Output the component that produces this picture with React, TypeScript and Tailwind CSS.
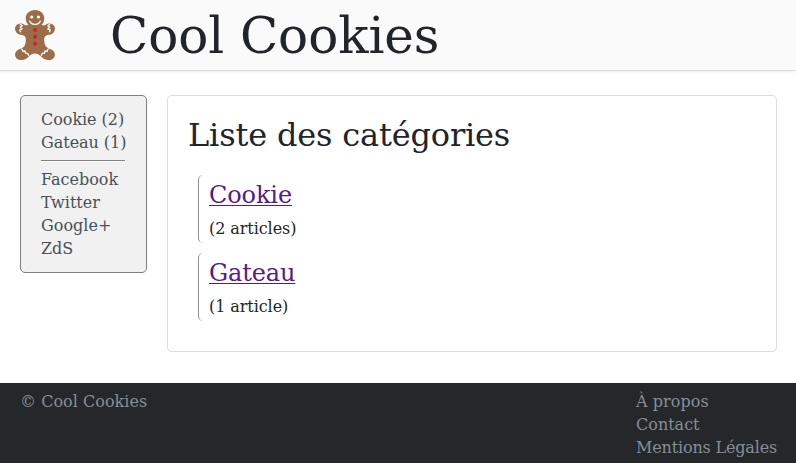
import React from "react";

const categories = [
  { name: "Cookie", count: 2 },
  { name: "Gateau", count: 1 },
];
const socials = ["Facebook", "Twitter", "Google+", "ZdS"];

function Gingerbread() {
  return (
    <svg className="ml-[15px] h-[50px] w-[40px] shrink-0" viewBox="0 0 40 50">
      <path
        d="M20 0C14.4 0 10.7 3.8 10.7 8.4C10.7 11 11.8 13.2 13.4 14.8C12 15.5 10.8 15.6 9.4 14.8C6.4 12.4 2 13.2 .5 16.6C-1 20.4 1.6 24.2 5.4 24.7C8 25 10.2 25.4 10.6 27.8C11.1 31 10.6 34.4 9 36.6C7.6 38.4 5.6 38.8 3.6 39.6C.6 41 -.5 44 .4 46.4C1.6 49.6 5.4 50.4 8.6 49.8C13.2 49 15 43.6 20 43.6C25 43.6 26.8 49 31.4 49.8C34.6 50.4 38.4 49.6 39.6 46.4C40.5 44 39.4 41 36.4 39.6C34.4 38.8 32.4 38.4 31 36.6C29.4 34.4 28.9 31 29.4 27.8C29.8 25.4 32 25 34.6 24.7C38.4 24.2 41 20.4 39.5 16.6C38 13.2 33.6 12.4 30.6 14.8C29.2 15.6 28 15.5 26.6 14.8C28.2 13.2 29.3 11 29.3 8.4C29.3 3.8 25.6 0 20 0Z"
        fill="#9b6e49"
      />
      <g fill="#fff">
        <circle cx="16.7" cy="7" r="1.6" />
        <circle cx="23.4" cy="7" r="1.6" />
      </g>
      <g fill="none" stroke="#fff" strokeWidth="1.3" strokeLinecap="round" strokeLinejoin="round">
        <path d="M14.8 11.2C16.6 15.4 23.4 15.4 25.2 11.2" />
        <path d="M5.2 14.2L7.2 15.8L5.2 17.2L7.2 19L4.6 20L5.6 21.8" />
        <path d="M34.8 14.2L32.8 15.8L34.8 17.2L32.8 19L35.4 20L34.4 21.8" />
        <path d="M7 39.2L8 41.4L10 41L10.6 43.4L12.8 43.4L13.6 45.6" />
        <path d="M33 39.2L32 41.4L30 41L29.4 43.4L27.2 43.4L26.4 45.6" />
      </g>
      <g fill="#ca2430">
        <circle cx="20" cy="20" r="2.1" />
        <circle cx="20" cy="26.8" r="2.1" />
        <circle cx="20" cy="33.8" r="2.1" />
      </g>
    </svg>
  );
}

export default function App() {
  return (
    <div className="flex h-[463px] w-[796px] flex-col overflow-hidden bg-white font-['DejaVu_Serif',serif] text-[16px] leading-[23px] text-[#212529]">
      <header className="flex h-[71px] shrink-0 items-center border-b border-[#d9d9d9] bg-[#fafafa] shadow-[0_1px_3px_rgba(0,0,0,0.08)]">
        <Gingerbread />
        <h1 className="ml-[55px] pt-[2px] text-[50px] leading-[68px] tracking-[-0.08px]">Cool Cookies</h1>
      </header>
      <div className="flex grow items-start gap-5 pt-6 pr-[19px] pl-5">
        <aside className="h-[178px] w-[127px] shrink-0 rounded-[5px] border border-[#808080] bg-[#f1f1f1] px-5 pt-3 whitespace-nowrap text-[#495057]">
          <ul className="tracking-[-0.04px]">
            {categories.map((c) => (
              <li key={c.name}>{c.name} ({c.count})</li>
            ))}
          </ul>
          <hr className="mt-[6px] mb-[6px] h-[2px] w-[84px] border-t border-b border-t-[#808080] border-b-white" />
          <ul>
            {socials.map((s) => (
              <li key={s}>{s}</li>
            ))}
          </ul>
        </aside>
        <main className="h-[257px] grow rounded-[5px] border border-[#dddddd] px-5 pt-[19px]">
          <h2 className="text-[32px] leading-[40px] tracking-[-0.16px]">Liste des catégories</h2>
          <div className="mt-5 ml-[10px] flex flex-col gap-[10px]">
            {categories.map((c) => (
              <section key={c.name} className="h-[68px] rounded-[5px] border-l border-[#909090] pl-[10px]">
                <h3 className="pt-1 text-[24px] leading-[32px] tracking-[-0.12px]">
                  <a className="text-[#551a8b] underline decoration-1 underline-offset-2">{c.name}</a>
                </h3>
                <p className="mt-[6px] tracking-[-0.08px]">({c.count} {c.count > 1 ? "articles" : "article"})</p>
              </section>
            ))}
          </div>
        </main>
      </div>
      <footer className="flex h-[80px] shrink-0 justify-between bg-[#24282b] pt-[7px] pr-[19px] pl-5 text-[#868e96]">
        <p className="tracking-[0.03px]">© Cool Cookies</p>
        <ul className="w-[141px] whitespace-nowrap">
          <li className="tracking-[0.06px]">À propos</li>
          <li>Contact</li>
          <li className="tracking-[-0.16px]">Mentions Légales</li>
        </ul>
      </footer>
    </div>
  );
}
